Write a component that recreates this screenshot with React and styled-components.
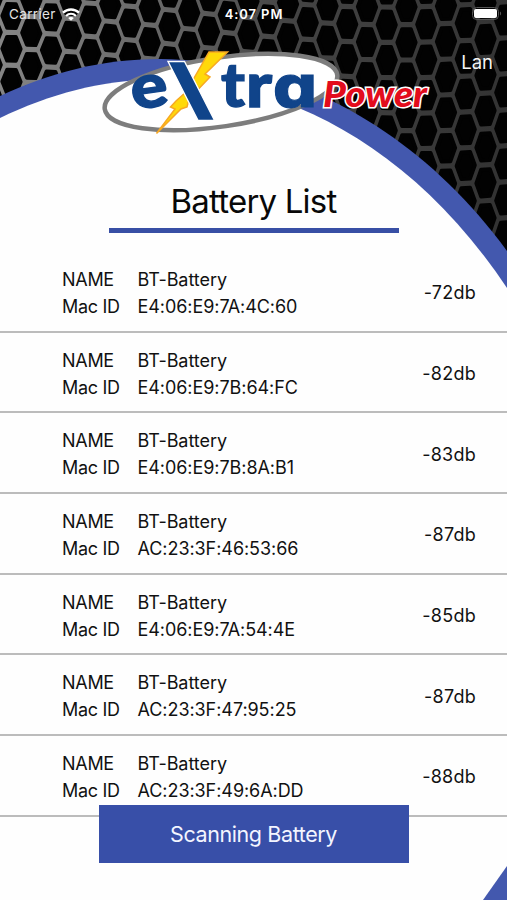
import styled, { createGlobalStyle } from "styled-components"

// data
const batteries = [
    { name: "BT-Battery", mac: "E4:06:E9:7A:4C:60", signal: "-72db" },
    { name: "BT-Battery", mac: "E4:06:E9:7B:64:FC", signal: "-82db" },
    { name: "BT-Battery", mac: "E4:06:E9:7B:8A:B1", signal: "-83db" },
    { name: "BT-Battery", mac: "AC:23:3F:46:53:66", signal: "-87db" },
    { name: "BT-Battery", mac: "E4:06:E9:7A:54:4E", signal: "-85db" },
    { name: "BT-Battery", mac: "AC:23:3F:47:95:25", signal: "-87db" },
    { name: "BT-Battery", mac: "AC:23:3F:49:6A:DD", signal: "-88db" },
]

const GlobalStyle = createGlobalStyle`
    * {
        box-sizing: border-box;
    }

    body {
        margin: 0;
        background: #fff;
        font-family: Inter, "Liberation Sans", sans-serif;
    }
`

const Screen = styled.main`
    position: relative;
    width: 507px;
    height: 900px;
    overflow: hidden;
    background: #fefefe;
    color: #111;
`

const Backdrop = styled.svg`
    position: absolute;
    top: 0;
    left: 0;
    z-index: 0;
`

const Content = styled.div`
    position: relative;
    z-index: 1;
    display: flex;
    flex-direction: column;
`

const StatusBar = styled.div`
    display: grid;
    grid-template-columns: 1fr auto 1fr;
    align-items: center;
    height: 28px;
    padding: 0 5px 0 9px;
    color: #fff;
    font-size: 13.5px;
`

const Carrier = styled.div`
    display: flex;
    align-items: center;
    gap: 6px;
    letter-spacing: 0.35px;
    color: #e4e4e4;
`

const Time = styled.div`
    margin-right: 3px;
    font-size: 13px;
    font-weight: 600;
    letter-spacing: 0.9px;
`

const BatteryLevel = styled.svg`
    justify-self: end;
`

const Header = styled.header`
    display: flex;
    align-items: flex-start;
    justify-content: space-between;
    height: 142px;
    padding: 18px 14px 0 98px;
`

const LogoSvg = styled.svg`
    flex: none;
`

const LogoLetter = styled.text`
    fill: #10448a;
    stroke: #10448a;
    stroke-width: 1.4px;
    font-family: Lato, sans-serif;
    font-size: 61px;
    font-weight: 900;
`

// Inter has a single-storey "a" as a character variant
const RoundLetter = styled(LogoLetter)`
    stroke-width: 1px;
    font-family: Inter, sans-serif;
    font-size: 58px;
    font-weight: 800;
    font-feature-settings: "cv11" 1;
`

const LangButton = styled.button`
    margin-top: 4px;
    padding: 0;
    border: 0;
    background: none;
    color: #f4f4f4;
    font-family: inherit;
    font-size: 18.5px;
    font-weight: 400;
    line-height: 24px;
`

const Title = styled.h1`
    align-self: center;
    width: 290px;
    height: 63px;
    margin: 0;
    padding-top: 10px;
    border-bottom: 5px solid #384fa5;
    color: #080808;
    font-size: 33px;
    font-weight: 400;
    line-height: 42px;
    letter-spacing: -0.8px;
    text-align: center;
`

const List = styled.ul`
    margin: 19px 0 0;
    padding: 0;
    list-style: none;
`

const Item = styled.li`
    display: flex;
    align-items: center;
    justify-content: space-between;
    height: 80.7px;
    padding: 3px 31px 0 62px;
    border-bottom: 2px solid #bcbcbc;
    font-size: 18px;
`

const Details = styled.dl`
    display: grid;
    grid-template-columns: 75.5px auto;
    margin: 0;
    line-height: 27px;
`

const Label = styled.dt`
    letter-spacing: -0.3px;
`

const Value = styled.dd`
    margin: 0;
    letter-spacing: -0.06px;
    white-space: nowrap;
`

const Signal = styled.span`
    font-size: 18px;
    letter-spacing: 0.25px;
`

const ScanButton = styled.button`
    position: absolute;
    left: 99px;
    bottom: 37px;
    z-index: 2;
    width: 310px;
    height: 58px;
    padding: 0 1px 0 0;
    border: 0;
    background: #384fa8;
    color: #f3f5ff;
    font-family: inherit;
    font-size: 21.5px;
    letter-spacing: -0.4px;
`

// holes of the metal grille, laid on a slightly bent lattice
const holes = []
for (let col = -9; col <= 17; col++) {
    for (let row = -6; row <= 15; row++) {
        if ((col + row) % 2 === 0) continue
        const x = 169.5 + 19.75 * col
        const pitch = 16.4 + (x / 507) * 1.6
        const bend = (Math.PI * (x - 190)) / 420
        const y = 46 + 14 * Math.sin(bend) + row * pitch
        const tilt = 0.105 * Math.cos(bend)
        const top = pitch - 4.5
        const points = [
            [-9.2, 0],
            [-4.4, -top],
            [4.4, -top],
            [9.2, 0],
            [4.4, top],
            [-4.4, top],
        ].map(([dx, dy]) => `${(x + dx).toFixed(1)},${(y + dy + dx * tilt).toFixed(1)}`)
        holes.push(points.join(" "))
    }
}

const Background = () => (
    <Backdrop width="507" height="900" viewBox="0 0 507 900">
        <defs>
            <linearGradient id="metal" gradientUnits="userSpaceOnUse" x1="0" y1="60" x2="507" y2="120">
                <stop offset="0" stopColor="#858585" />
                <stop offset="0.3" stopColor="#676767" />
                <stop offset="0.55" stopColor="#444" />
                <stop offset="1" stopColor="#333" />
            </linearGradient>
        </defs>
        <rect width="507" height="300" fill="url(#metal)" />
        <g fill="#020202" stroke="#020202" strokeWidth="3.8" strokeLinejoin="round">
            {holes.map((points) => (
                <polygon key={points} points={points} />
            ))}
        </g>
        <path d="M0 96C50 73 100 59 160 59C270 60 405 112 507 251V310H0Z" fill="#4358ae" />
        <path d="M0 118C50 94 100 80 160 79C270 79 405 135 507 288V866L483 900H0Z" fill="#fefefe" />
        <path d="M507 866V900H483Z" fill="#4358ae" />
    </Backdrop>
)

const Logo = () => (
    <LogoSvg width="336" height="92" viewBox="98 46 336 92">
        <ellipse
            cx="221"
            cy="92"
            rx="117.5"
            ry="34.500"
            transform="rotate(-8.4 221 92)"
            fill="#fff"
            stroke="#7d7d7d"
            strokeWidth="4.5"
        />
        <LogoLetter x="131" y="107.500" textLength="37" lengthAdjust="spacingAndGlyphs" transform="rotate(-8 149 92)">
            e
        </LogoLetter>
        <LogoLetter x="221" y="107" textLength="24" lengthAdjust="spacingAndGlyphs">t</LogoLetter>
        <LogoLetter x="246" y="107" textLength="26" lengthAdjust="spacingAndGlyphs">r</LogoLetter>
        <RoundLetter x="273" y="107" textLength="44" lengthAdjust="spacingAndGlyphs">a</RoundLetter>
        <path
            d="M209 52H227.500L205 74L210 77L189 99L187 107L181 109L156.500 133.500L175 109L170.500 107L176 101L186 92Z"
            fill="#ffd90a"
            stroke="#f7a823"
            strokeWidth="1.5"
        />
        <rect
            x="168"
            y="61.500"
            width="16.500"
            height="59"
            transform="translate(168 61.500) skewX(27) translate(-168 -61.500)"
            fill="#10448a"
            stroke="#fff"
            strokeWidth="1.5"
        />
        <text
            x="323"
            y="107"
            textLength="104"
            lengthAdjust="spacingAndGlyphs"
            fill="#e30c1c"
            stroke="#fff"
            strokeWidth="3"
            paintOrder="stroke"
            fontFamily="Lato, sans-serif"
            fontStyle="italic"
            fontWeight="900"
            fontSize="36"
        >
            Power
        </text>
    </LogoSvg>
)

const WifiIcon = () => (
    <svg width="18" height="13" viewBox="0 0 18 13" fill="none" stroke="#fff" strokeWidth="2.3">
        <path d="M1 4.700C5.500 0.400 12.500 0.400 17 4.700" />
        <path d="M4 8C7 5.200 11 5.200 14 8" />
        <path d="M9 12.800L6.200 10C7.800 8.600 10.200 8.600 11.800 10Z" fill="#fff" stroke="none" />
    </svg>
)

const App = () => {
    return (
        <Screen>
            <GlobalStyle />
            <Background />
            <Content>
                <StatusBar>
                    <Carrier>
                        Carrier
                        <WifiIcon />
                    </Carrier>
                    <Time>4:07 PM</Time>
                    <BatteryLevel width="30" height="14" viewBox="0 0 30 14">
                        <rect x="0.500" y="0.500" width="26" height="12" rx="4" fill="none" stroke="#555" />
                        <rect x="2" y="2" width="23" height="9" rx="2" fill="#fff" />
                        <path d="M28 4.500V8.500C29.500 8 29.500 5 28 4.500Z" fill="#555" />
                    </BatteryLevel>
                </StatusBar>
                <Header>
                    <Logo />
                    <LangButton>Lan</LangButton>
                </Header>
                <Title>Battery List</Title>
                <List>
                    {batteries.map((battery) => (
                        <Item key={battery.mac}>
                            <Details>
                                <Label>NAME</Label>
                                <Value>{battery.name}</Value>
                                <Label>Mac ID</Label>
                                <Value>{battery.mac}</Value>
                            </Details>
                            <Signal>{battery.signal}</Signal>
                        </Item>
                    ))}
                </List>
            </Content>
            <ScanButton>Scanning Battery</ScanButton>
        </Screen>
    )
}

export default App
